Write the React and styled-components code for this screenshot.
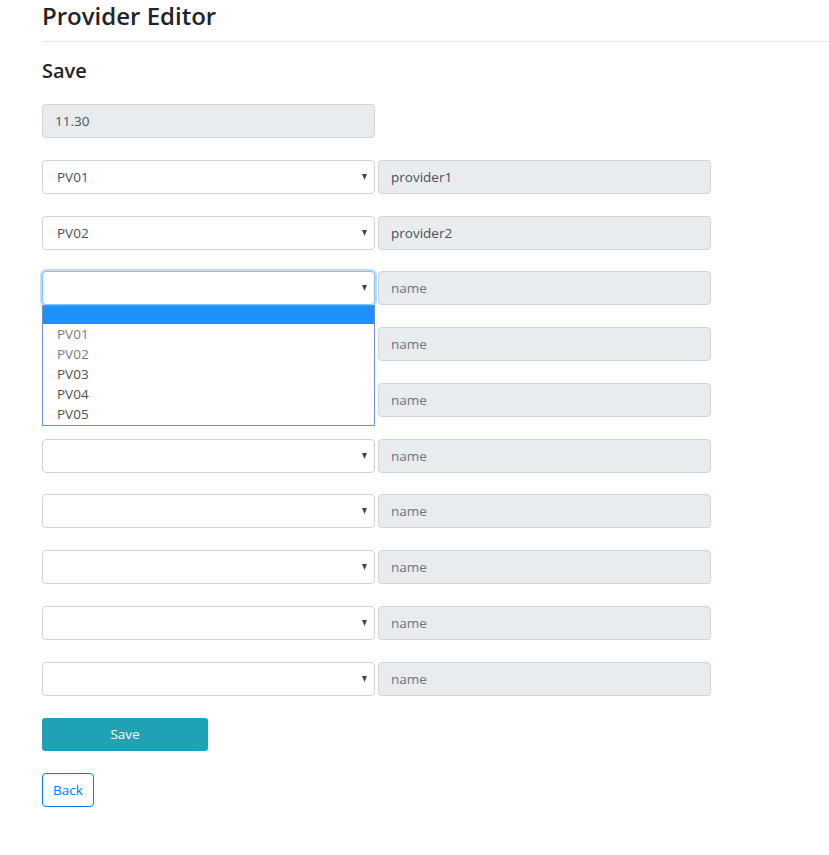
import React from 'react'
import styled, { createGlobalStyle } from 'styled-components'

const GlobalStyle = createGlobalStyle`
  body {
    margin: 0;
    background: #fff;
    font-family: 'Open Sans', 'Noto Sans', sans-serif;
    color: #212529;
  }
`

const Page = styled.div`
  padding-left: 42px;
  padding-top: 1px;
  width: 787px;
`

const Title = styled.h2`
  margin: 0;
  font-size: 24px;
  font-weight: 600;
  line-height: 29px;
  color: #212529;
`

const Rule = styled.hr`
  margin: 11px 0 0;
  border: 0;
  border-top: 1px solid #e6e6e6;
`

const SubTitle = styled.h3`
  margin: 15px 0 0;
  font-size: 20px;
  font-weight: 600;
  line-height: 28px;
`

const Form = styled.div`
  display: flex;
  flex-direction: column;
  gap: 21.78px;
  margin-top: 19px;
`

const Row = styled.div`
  display: flex;
  gap: 3px;
  position: relative;
`

const Field = styled.div`
  box-sizing: border-box;
  width: 333px;
  height: 34px;
  padding: 0 12px;
  display: flex;
  align-items: center;
  font-size: 13.5px;
  background: #e9ecef;
  border: 1px solid #ced4da;
  border-radius: 4px;
  color: ${(p) => (p.$placeholder ? '#6c757d' : '#495057')};
`

const SelectBox = styled.div`
  box-sizing: border-box;
  width: 333px;
  height: 34px;
  padding: 0 7px 0 14px;
  display: flex;
  align-items: center;
  justify-content: space-between;
  font-size: 13.5px;
  color: #495057;
  background: #fff;
  border: 1px solid ${(p) => (p.$focused ? '#80bdff' : '#ced4da')};
  border-radius: 4px;
  box-shadow: ${(p) => (p.$focused ? '0 0 0 2px rgba(0, 123, 255, 0.25)' : 'none')};
`

const Menu = styled.div`
  position: absolute;
  top: 34px;
  left: 0;
  box-sizing: border-box;
  width: 333px;
  background: #fff;
  border: 1px solid #6f8fd0;
  z-index: 5;
  padding-bottom: 1px;
`

const MenuItem = styled.div`
  height: ${(p) => (p.$active ? '18px' : '20px')};
  line-height: 20px;
  padding-left: 14px;
  font-size: 13.5px;
  background: ${(p) => (p.$active ? '#1e90ff' : '#fff')};
  color: ${(p) => (p.$used ? '#7a7a7a' : '#505050')};
`

const Actions = styled.div`
  display: flex;
  flex-direction: column;
  align-items: flex-start;
  gap: 22px;
  margin-top: 22px;
`

const SaveButton = styled.button`
  width: 166px;
  height: 33px;
  border: 0;
  border-radius: 3px;
  background: #1fa2b5;
  color: #fff;
  font-family: inherit;
  font-size: 13.5px;
`

const BackButton = styled.button`
  height: 34px;
  padding: 0 10px;
  border: 1px solid #007bff;
  border-radius: 4px;
  background: #fff;
  color: #007bff;
  font-family: inherit;
  font-size: 13.5px;
`

const Caret = () => (
  <svg width="5" height="6" viewBox="0 0 5 6">
    <path d="M0 0 H5 L2.5 6 Z" fill="#444" />
  </svg>
)

const rows = [
  { code: 'PV01', name: 'provider1' },
  { code: 'PV02', name: 'provider2' },
  { code: '', name: '', open: true },
  {}, {}, {}, {}, {}, {}, {},
]

const options = ['PV01', 'PV02', 'PV03', 'PV04', 'PV05']

const ProviderRow = ({ code, name, open }) => (
  <Row>
    <SelectBox $focused={open}>
      <span>{code}</span>
      <Caret />
    </SelectBox>
    <Field $placeholder={!name}>{name || 'name'}</Field>
    {open && (
      <Menu>
        <MenuItem $active />
        {options.map((o, i) => (
          <MenuItem key={o} $used={i < 2}>{o}</MenuItem>
        ))}
      </Menu>
    )}
  </Row>
)

export default function App() {
  return (
    <Page>
      <GlobalStyle />
      <Title>Provider Editor</Title>
      <Rule />
      <SubTitle>Save</SubTitle>
      <Form>
        <Row>
          <Field>11.30</Field>
        </Row>
        {rows.map((r, i) => (
          <ProviderRow key={i} {...r} />
        ))}
      </Form>
      <Actions>
        <SaveButton>Save</SaveButton>
        <BackButton>Back</BackButton>
      </Actions>
    </Page>
  )
}
